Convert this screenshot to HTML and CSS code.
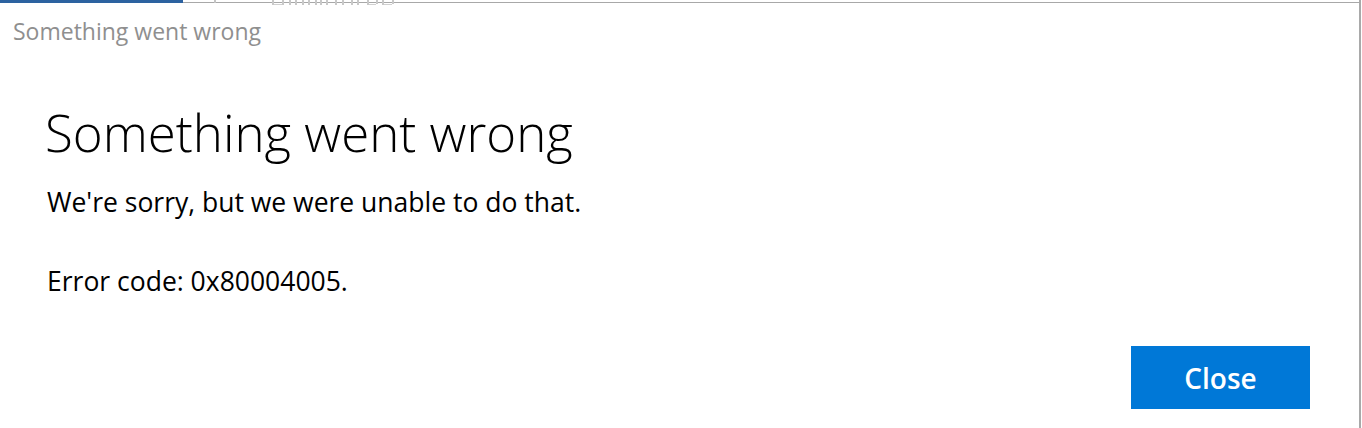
FILE: index.html
```html
<!DOCTYPE html>
<html lang="en">
<head>
<meta charset="utf-8">
<title>Something went wrong</title>
<link rel="stylesheet" href="styles.css">
</head>
<body>
<div class="backdrop">
  <div class="bg-tab"></div>
  <div class="bg-rule">
    <svg class="bg-marks" width="260" height="6" viewBox="0 0 260 6" aria-hidden="true">
      <rect x="31" y="0" width="2" height="3" fill="#c4c4c4"/>
      <rect x="89" y="0" width="2" height="5" fill="#c8c8c8"/>
      <rect x="99" y="0" width="2" height="5" fill="#c8c8c8"/>
      <rect x="91" y="4" width="8" height="1" fill="#d0d0d0"/>
      <rect x="106" y="0" width="2" height="5" fill="#c8c8c8"/>
      <rect x="112" y="0" width="2" height="5" fill="#c8c8c8"/>
      <rect x="119" y="0" width="2" height="5" fill="#c8c8c8"/>
      <rect x="125" y="0" width="2" height="5" fill="#c8c8c8"/>
      <rect x="132" y="0" width="2" height="5" fill="#c8c8c8"/>
      <rect x="137" y="0" width="2" height="5" fill="#c8c8c8"/>
      <rect x="143" y="0" width="2" height="5" fill="#c8c8c8"/>
      <rect x="152" y="0" width="2" height="5" fill="#c8c8c8"/>
      <rect x="159" y="0" width="2" height="5" fill="#c8c8c8"/>
      <rect x="168" y="0" width="2" height="5" fill="#c8c8c8"/>
      <rect x="174" y="0" width="2" height="5" fill="#c8c8c8"/>
      <rect x="184" y="0" width="2" height="5" fill="#c8c8c8"/>
      <rect x="186" y="4" width="7" height="1" fill="#d0d0d0"/>
      <rect x="193" y="0" width="2" height="4" fill="#c8c8c8"/>
      <rect x="199" y="0" width="2" height="5" fill="#c8c8c8"/>
      <rect x="201" y="4" width="8" height="1" fill="#d0d0d0"/>
      <rect x="209" y="0" width="2" height="4" fill="#c8c8c8"/>
    </svg>
  </div>
  <div class="bg-edge"></div>
</div>
<main class="dialog">
  <div class="app-title">Something went wrong</div>
  <div class="content">
    <h1 class="heading">Something went wrong</h1>
    <p class="message">We're sorry, but we were unable to do that.</p>
    <p class="code">Error code: 0x80004005.</p>
  </div>
  <div class="actions">
    <button class="close-btn">Close</button>
  </div>
</main>
</body>
</html>
```
FILE: styles.css
```css
html, body {
  margin: 0;
  padding: 0;
  background: #ffffff;
  width: 1362px;
  height: 428px;
  overflow: hidden;
  font-family: "Open Sans", "Noto Sans", sans-serif;
}

.backdrop {
  position: absolute;
  top: 0;
  left: 0;
  width: 1362px;
  height: 6px;
  overflow: hidden;
  z-index: 2;
  pointer-events: none;
}

.bg-tab {
  position: absolute;
  left: 0;
  top: 0;
  width: 183px;
  height: 3px;
  background: #2c62a0;
}

.bg-rule {
  position: absolute;
  left: 183px;
  top: 0;
  width: 954px;
  height: 2px;
  border-bottom: 1px solid #a8a8a8;
}

.bg-marks {
  position: absolute;
  left: 0;
  top: 0;
  display: block;
}

.bg-edge {
  position: absolute;
  left: 1136px;
  top: 2px;
  width: 224px;
  height: 1px;
  background: #a8a8a8;
}

.dialog {
  box-sizing: border-box;
  width: 1361px;
  height: 428px;
  border-right: 2px solid #a9a9a9;
  display: flex;
  flex-direction: column;
}

.app-title {
  margin: 15px 0 0 13px;
  font-size: 23px;
  line-height: 32px;
  color: #8f8f8f;
}

.content {
  padding-left: 45px;
  margin-top: 53px;
}

.heading {
  margin: 0;
  font-size: 51px;
  font-weight: 300;
  line-height: 64px;
  color: #000;
}

.message {
  margin: 20px 0 0 2px;
  font-size: 26.5px;
  line-height: 36px;
  color: #000;
}

.code {
  margin: 43px 0 0 2px;
  font-size: 26.5px;
  line-height: 36px;
  color: #000;
}

.actions {
  display: flex;
  justify-content: flex-end;
  padding-right: 49px;
  margin-top: 47px;
}

.close-btn {
  width: 179px;
  height: 63px;
  border: none;
  background: #0078d7;
  color: #fff;
  font-family: "Open Sans", "Noto Sans", sans-serif;
  font-size: 28px;
  font-weight: 600;
  padding: 0;
}
```
